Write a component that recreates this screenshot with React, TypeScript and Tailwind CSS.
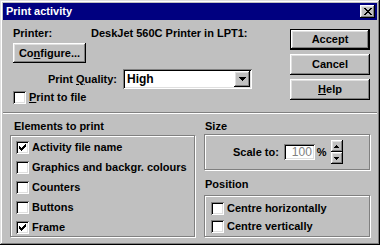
import React from "react";

const raised =
  "shadow-[inset_-1px_-1px_#000,inset_1px_1px_#fff,inset_-2px_-2px_#808080,inset_2px_2px_#dfdfdf]";
const sunken =
  "shadow-[inset_1px_1px_#808080,inset_-1px_-1px_#fff,inset_2px_2px_#000,inset_-2px_-2px_#dfdfdf]";

function Check({ checked }: { checked?: boolean }) {
  return (
    <span className={`w-[13px] h-[13px] bg-white ${sunken} flex items-center justify-center shrink-0`}>
      {checked && (
        <svg width="7" height="7" viewBox="0 0 7 7" shapeRendering="crispEdges">
          <path d="M6 0h1v3h-1zM5 1h1v3h-1zM4 2h1v3h-1zM3 3h1v3h-1zM2 4h1v3h-1zM1 3h1v3h-1zM0 2h1v3h-1z" fill="#000" />
        </svg>
      )}
    </span>
  );
}

function CheckRow({ label, checked, u }: { label: string; checked?: boolean; u?: boolean }) {
  return (
    <div className="flex items-center h-[13px] gap-[3px]">
      <Check checked={checked} />
      <span className="leading-[13px] whitespace-nowrap">
        {u ? (
          <>
            <span className="underline">{label[0]}</span>
            {label.slice(1)}
          </>
        ) : (
          label
        )}
      </span>
    </div>
  );
}

function Btn({ children, def, w = "w-[80px]" }: { children: React.ReactNode; def?: boolean; w?: string }) {
  return (
    <div className={`${w} h-[21px] ${def ? "border border-black" : ""} flex`}>
      <div className={`flex-1 ${raised} flex items-center justify-center leading-[13px]`}>{children}</div>
    </div>
  );
}

function Arrow({ up }: { up?: boolean }) {
  return (
    <svg width="5" height="3" viewBox="0 0 5 3" shapeRendering="crispEdges">
      {up ? (
        <path d="M2 0h1v1h-1zM1 1h3v1h-3zM0 2h5v1h-5z" fill="#000" />
      ) : (
        <path d="M0 0h5v1h-5zM1 1h3v1h-3zM2 2h1v1h-1z" fill="#000" />
      )}
    </svg>
  );
}

export default function App() {
  return (
    <div
      className="w-[380px] h-[245px] bg-[#c0c0c0] p-[3px] flex flex-col text-black text-[11px] font-bold shadow-[inset_-1px_-1px_#000,inset_1px_1px_#dfdfdf,inset_-2px_-2px_#808080,inset_2px_2px_#fff]"
      style={{ fontFamily: '"Liberation Sans", Arial, sans-serif' }}
    >
      {/* Title bar */}
      <div className="h-[17px] bg-[#000080] flex items-center pl-[3px] pr-[2px] shrink-0">
        <span className="text-white leading-[13px] flex-1">Print activity</span>
        <div className={`w-[15px] h-[13px] bg-[#c0c0c0] ${raised} flex items-center justify-center`}>
          <svg width="8" height="7" viewBox="0 0 8 7" shapeRendering="crispEdges">
            <path d="M0 0h2v1h-2zM6 0h2v1h-2zM1 1h2v1h-2zM5 1h2v1h-2zM2 2h4v1h-4zM3 3h2v1h-2zM2 4h4v1h-4zM1 5h2v1h-2zM5 5h2v1h-2zM0 6h2v1h-2zM6 6h2v1h-2z" fill="#000" />
          </svg>
        </div>
      </div>

      {/* Top section */}
      <div className="h-[92px] flex pl-[10px] pr-[7px] pt-[7px] shrink-0">
        <div className="flex flex-col">
          <div className="flex h-[13px] leading-[13px]">
            <span className="w-[78px]">Printer:</span>
            <span>DeskJet 560C Printer in LPT1:</span>
          </div>
          <div className="mt-[3px]">
            <div className={`w-[73px] h-[20px] ${raised} flex items-center justify-center leading-[13px]`}>
              <span>
                Co<span className="underline">n</span>figure...
              </span>
            </div>
          </div>
          <div className="mt-[6px] flex items-center h-[20px]">
            <span className="w-[104px] text-right leading-[13px]">
              Print <span className="underline">Q</span>uality:
            </span>
            <div className={`ml-[6px] w-[129px] h-[20px] bg-white ${sunken} flex items-center pl-[4px] pr-[2px]`}>
              <span className="flex-1 leading-[13px] text-[12px]">High</span>
              <div className={`w-[16px] h-[16px] bg-[#c0c0c0] ${raised} flex items-center justify-center`}>
                <svg width="7" height="4" viewBox="0 0 7 4" shapeRendering="crispEdges">
                  <path d="M0 0h7v1h-7zM1 1h5v1h-5zM2 2h3v1h-3zM3 3h1v1h-1z" fill="#000" />
                </svg>
              </div>
            </div>
          </div>
          <div className="mt-[2px]">
            <CheckRow label="Print to file" u />
          </div>
        </div>
        <div className="ml-auto flex flex-col gap-[4px] pt-[2px]">
          <Btn def>Accept</Btn>
          <Btn>Cancel</Btn>
          <Btn>
            <span>
              <span className="underline">H</span>elp
            </span>
          </Btn>
        </div>
      </div>

      {/* Separator */}
      <div className="h-[2px] border-t border-[#808080] border-b-white border-b shrink-0" />

      {/* Bottom section */}
      <div className="flex pl-[7px] pt-[6px] gap-[8px]">
        <div className="flex flex-col w-[186px]">
          <span className="leading-[13px] pl-[4px]">Elements to print</span>
          <div className="mt-[2px] h-[102px] border border-[#808080] shadow-[1px_1px_#fff,inset_1px_1px_#fff] w-[185px] flex flex-col pl-[5px] pt-[5px] gap-[7px]">
            <CheckRow label="Activity file name" checked />
            <CheckRow label="Graphics and backgr. colours" />
            <CheckRow label="Counters" />
            <CheckRow label="Buttons" />
            <CheckRow label="Frame" checked />
          </div>
        </div>
        <div className="flex flex-col w-[167px]">
          <span className="leading-[13px] pl-[1px]">Size</span>
          <div className="mt-[1px] h-[36px] border border-[#808080] shadow-[1px_1px_#fff,inset_1px_1px_#fff] w-[166px] flex items-center pl-[28px]">
            <span className="leading-[13px]">Scale to:</span>
            <div className={`ml-[5px] w-[31px] h-[16px] bg-white ${sunken} flex items-center justify-end pr-[3px]`}>
              <span className="text-[#808080] font-normal text-[12px] leading-[13px]">100</span>
            </div>
            <span className="ml-[2px] leading-[13px]">%</span>
            <div className="ml-[4px] flex flex-col w-[12px]">
              <div className={`h-[12px] ${raised} flex items-center justify-center`}>
                <Arrow up />
              </div>
              <div className={`h-[12px] ${raised} flex items-center justify-center`}>
                <Arrow />
              </div>
            </div>
          </div>
          <span className="mt-[8px] leading-[13px] pl-[1px]">Position</span>
          <div className="mt-[4px] h-[42px] border border-[#808080] shadow-[1px_1px_#fff,inset_1px_1px_#fff] w-[166px] flex flex-col pl-[6px] pt-[6px] gap-[5px]">
            <CheckRow label="Centre horizontally" />
            <CheckRow label="Centre vertically" />
          </div>
        </div>
      </div>
    </div>
  );
}
